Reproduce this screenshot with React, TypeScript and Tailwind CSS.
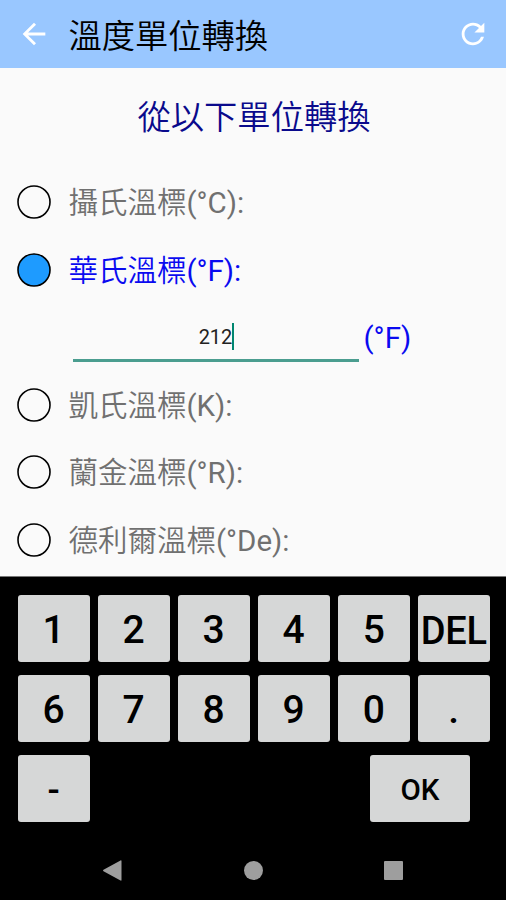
import { useState } from "react";
import clsx from "clsx";
import { MdArrowBack, MdRefresh } from "react-icons/md";

const UNITS = [
  { id: "celsius", name: "攝氏溫標", symbol: "°C" },
  { id: "fahrenheit", name: "華氏溫標", symbol: "°F" },
  { id: "kelvin", name: "凱氏溫標", symbol: "K" },
  { id: "rankine", name: "蘭金溫標", symbol: "°R" },
  { id: "delisle", name: "德利爾溫標", symbol: "°De" },
];

const KEYS = ["1", "2", "3", "4", "5", "DEL", "6", "7", "8", "9", "0", "."];

interface UnitRowProps {
  name: string;
  symbol: string;
  selected: boolean;
  onSelect: () => void;
}

const UnitRow: React.FC<UnitRowProps> = ({
  name,
  symbol,
  selected,
  onSelect,
}) => (
  <button
    onClick={onSelect}
    className="flex h-[67.5px] w-full shrink-0 items-center pl-[17px] text-left"
  >
    <svg className="h-[34px] w-[34px] shrink-0" viewBox="0 0 34 34">
      <circle
        cx="17"
        cy="17"
        r="16"
        strokeWidth="1.6"
        className={clsx("stroke-black", selected ? "fill-[#1e9bff]" : "fill-none")}
      />
    </svg>
    <span
      className={clsx(
        "ml-[17.4px] whitespace-nowrap pt-[2px] text-[29.5px] leading-[40px]",
        selected ? "text-[#0a0af0]" : "text-[#707070]"
      )}
    >
      <span className="font-[350]">{name}</span>({symbol}):
    </span>
  </button>
);

interface KeyProps {
  label: string;
  className?: string;
  onPress: (key: string) => void;
}

const Key: React.FC<KeyProps> = ({ label, className, onPress }) => (
  <button
    onClick={() => onPress(label)}
    className={clsx(
      "flex h-[67px] items-center justify-center rounded-[3px] bg-[#d6d7d7] font-medium leading-none text-black",
      className
    )}
  >
    {label}
  </button>
);

const App: React.FC = () => {
  const [unit, setUnit] = useState("fahrenheit");
  const [value, setValue] = useState("212");

  const handleKey = (key: string) => {
    if (key === "OK") return;
    if (key === "DEL") {
      setValue(value.slice(0, -1));
      return;
    }
    setValue(value + key);
  };

  return (
    <div className="flex h-[900px] w-[506px] flex-col overflow-hidden bg-[#fafafa] font-['Roboto','Noto_Sans_CJK_TC',sans-serif]">
      {/* App bar */}
      <header className="flex h-[67.5px] shrink-0 items-center bg-[#99c7ff] pl-[17px] pr-4">
        <MdArrowBack className="h-[34px] w-[34px] text-white" />
        <h1 className="ml-[17.4px] flex-1 pt-[6px] text-[33.3px] font-[350] leading-[44px] text-black">
          溫度單位轉換
        </h1>
        <button onClick={() => setValue("")}>
          <MdRefresh className="h-[34px] w-[34px] text-white" />
        </button>
      </header>

      {/* Unit list */}
      <main className="flex h-[508px] shrink-0 flex-col overflow-hidden">
        <h2 className="flex h-[101px] shrink-0 items-center justify-center pl-[2px] text-[33.3px] font-[350] leading-[44px] text-[#0a0a8c]">
          從以下單位轉換
        </h2>
        {UNITS.map((u) => (
          <div key={u.id} className="shrink-0">
            <UnitRow
              name={u.name}
              symbol={u.symbol}
              selected={u.id === unit}
              onSelect={() => setUnit(u.id)}
            />
            {u.id === unit && (
              <div className="flex h-[67.5px] items-center pl-[72.5px]">
                <div className="flex h-[50px] w-[286px] items-center justify-center border-b-[3px] border-[#4a9d8f] pl-[2px] pt-[2px]">
                  <span className="text-[20px] leading-6 text-[#222]">
                    {value}
                  </span>
                  <span className="h-[27px] w-[2px] bg-[#00866f]" />
                </div>
                <span className="ml-[5px] pt-[2px] text-[29.5px] leading-[40px] text-[#0a0af0]">
                  ({u.symbol})
                </span>
              </div>
            )}
          </div>
        ))}
      </main>

      {/* Keypad */}
      <section className="flex flex-1 flex-col border-t border-[#777] bg-black pt-[18px]">
        <div className="grid grid-cols-6 gap-x-[8px] gap-y-[13.3px] pl-[17.5px] pr-[16.2px]">
          {KEYS.map((k) => (
            <Key
              key={k}
              label={k}
              onPress={handleKey}
              className={clsx(
                "pt-[5px]",
                k === "DEL" ? "text-[38px] tracking-[-0.3px]" : "text-[39px]"
              )}
            />
          ))}
        </div>
        <div className="mt-[13.3px] flex justify-between pl-[17.5px] pr-9">
          <Key
            label="-"
            onPress={handleKey}
            className="w-[72px] pt-[5px] text-[36px]"
          />
          <Key
            label="OK"
            onPress={handleKey}
            className="w-[100px] pt-[4px] text-[29.5px]"
          />
        </div>

        {/* System navigation */}
        <nav className="mt-[37px] flex items-center justify-between pl-[102px] pr-[103px] text-[#9e9e9e]">
          <svg className="h-[23px] w-[21px]" viewBox="0 0 21 23" fill="currentColor">
            <path d="M18.5 1.5c.7-.4 1 0 1 .6v18.8c0 .6-.3 1-1 .6L1.5 12.2c-.6-.4-.6-1 0-1.4z" />
          </svg>
          <span className="h-[19px] w-[19px] rounded-full bg-[#9e9e9e]" />
          <span className="h-[19px] w-[19px] rounded-[1px] bg-[#9e9e9e]" />
        </nav>
      </section>
    </div>
  );
};

export default App;
